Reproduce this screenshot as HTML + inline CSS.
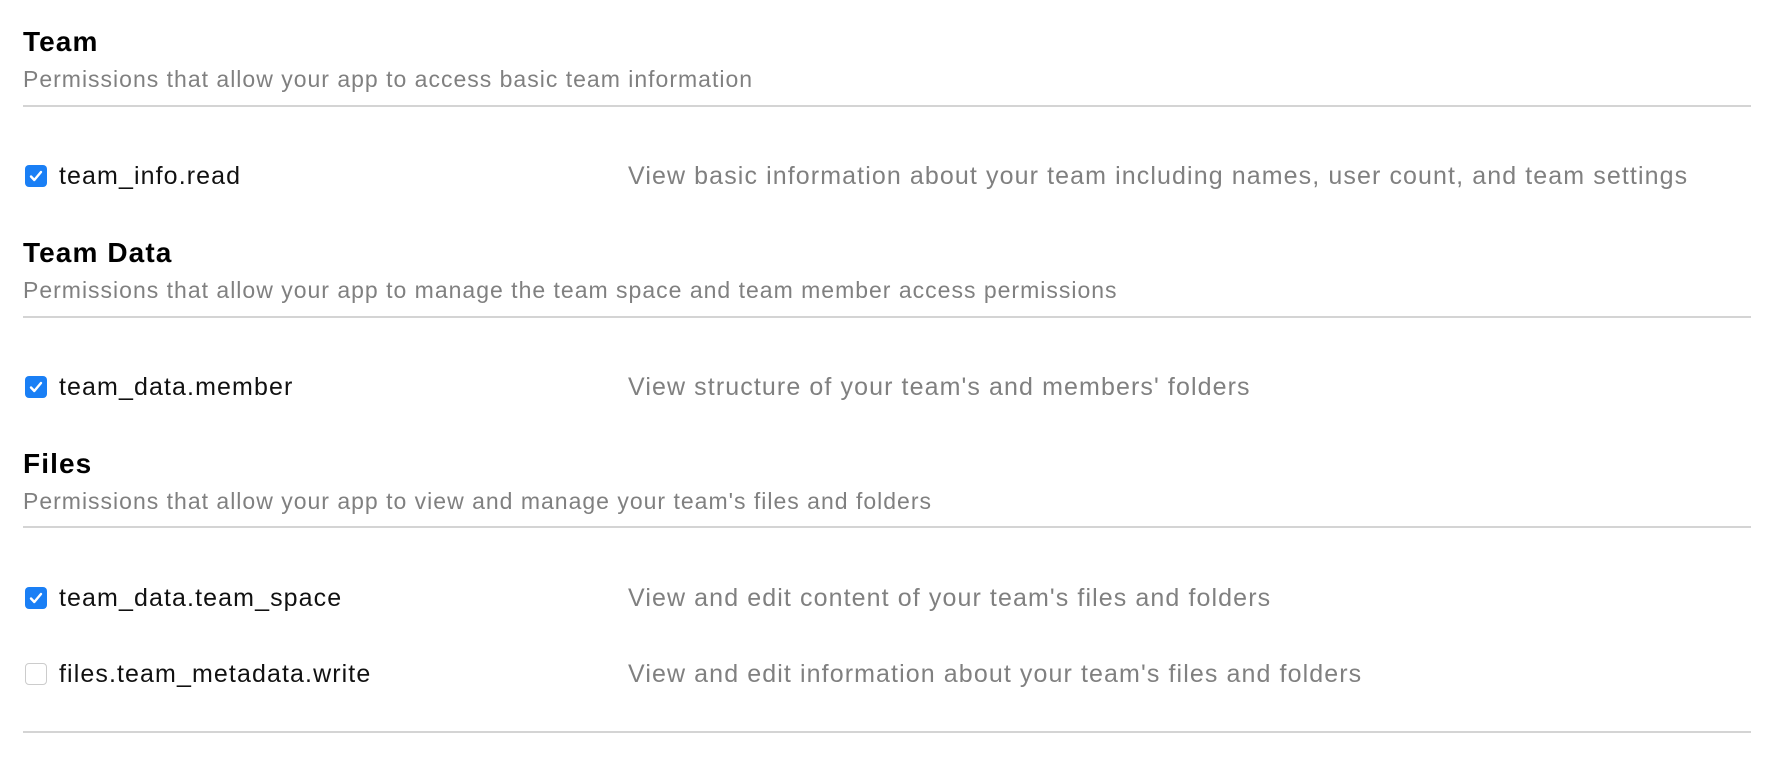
<!DOCTYPE html>
<html><head><meta charset="utf-8"><style>
body{margin:0;width:1770px;height:772px;background:#fff;font-family:"Liberation Sans",sans-serif;position:relative;overflow:hidden}
.a{position:absolute;white-space:nowrap}
.t{left:23px;font-weight:bold;font-size:28px;letter-spacing:1.1px;color:#000}
.s{left:23px;font-size:23px;letter-spacing:1px;color:#808080}
.hr{position:absolute;left:23px;width:1728px;height:2px;background:#d4d4d4}
.l{left:59px;font-size:25px;letter-spacing:1.1px;color:#111}
.d{left:628px;font-size:25px;letter-spacing:1.1px;color:#808080}
.cb{position:absolute;left:25px;width:22px;height:22px;border-radius:4px;background:#1a7ff5}
.cb svg{position:absolute;left:3px;top:3px}
.un{background:#fff;border:1.5px solid #ccc;box-sizing:border-box}
</style></head><body>
<div class="a t" style="top:26px">Team</div>
<div class="a s" style="top:66px">Permissions that allow your app to access basic team information</div>
<div class="hr" style="top:105px"></div>
<div class="cb" style="top:165px"><svg width="16" height="16" viewBox="0 0 16 16"><path d="M3 8.5l3.3 3.5L13 4" stroke="#fff" stroke-width="2.4" fill="none" stroke-linecap="round" stroke-linejoin="round"/></svg></div>
<div class="a l" style="top:162px">team_info.read</div>
<div class="a d" style="top:162px">View basic information about your team including names, user count, and team settings</div>

<div class="a t" style="top:237px">Team Data</div>
<div class="a s" style="top:277px">Permissions that allow your app to manage the team space and team member access permissions</div>
<div class="hr" style="top:316px"></div>
<div class="cb" style="top:376px"><svg width="16" height="16" viewBox="0 0 16 16"><path d="M3 8.5l3.3 3.5L13 4" stroke="#fff" stroke-width="2.4" fill="none" stroke-linecap="round" stroke-linejoin="round"/></svg></div>
<div class="a l" style="top:373px">team_data.member</div>
<div class="a d" style="top:373px">View structure of your team's and members' folders</div>

<div class="a t" style="top:448px">Files</div>
<div class="a s" style="top:488px">Permissions that allow your app to view and manage your team's files and folders</div>
<div class="hr" style="top:526px"></div>
<div class="cb" style="top:587px"><svg width="16" height="16" viewBox="0 0 16 16"><path d="M3 8.5l3.3 3.5L13 4" stroke="#fff" stroke-width="2.4" fill="none" stroke-linecap="round" stroke-linejoin="round"/></svg></div>
<div class="a l" style="top:584px">team_data.team_space</div>
<div class="a d" style="top:584px">View and edit content of your team's files and folders</div>
<div class="cb un" style="top:663px"></div>
<div class="a l" style="top:660px">files.team_metadata.write</div>
<div class="a d" style="top:660px">View and edit information about your team's files and folders</div>
<div class="hr" style="top:731px"></div>
</body></html>
